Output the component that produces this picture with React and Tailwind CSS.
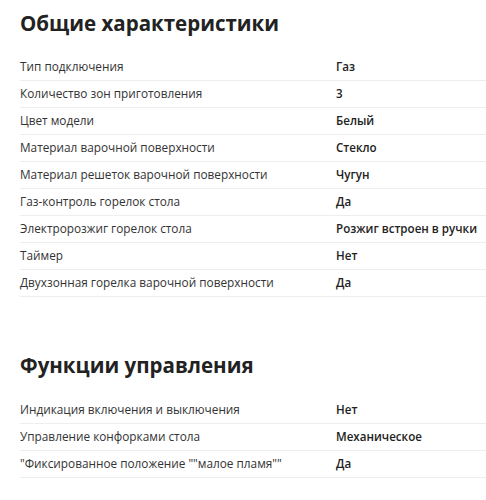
const sections = [
  {
    title: "Общие характеристики",
    rows: [
      ["Тип подключения", "Газ"],
      ["Количество зон приготовления", "3"],
      ["Цвет модели", "Белый"],
      ["Материал варочной поверхности", "Стекло"],
      ["Материал решеток варочной поверхности", "Чугун"],
      ["Газ-контроль горелок стола", "Да"],
      ["Электророзжиг горелок стола", "Розжиг встроен в ручки"],
      ["Таймер", "Нет"],
      ["Двухзонная горелка варочной поверхности", "Да"],
    ],
  },
  {
    title: "Функции управления",
    rows: [
      ["Индикация включения и выключения", "Нет"],
      ["Управление конфорками стола", "Механическое"],
      ['"Фиксированное положение ""малое пламя""', "Да"],
    ],
  },
];

export default function App() {
  return (
    <div
      className="w-[486px] h-[500px] overflow-hidden bg-white pl-5 pt-[9px]"
      style={{ fontFamily: '"Open Sans", "Liberation Sans", sans-serif' }}
    >
      {sections.map((s, i) => (
        <section key={s.title} className={i > 0 ? "mt-[54px]" : ""}>
          <h2 className="text-[20.5px] leading-[28px] font-bold text-[#222]">{s.title}</h2>
          <div className={i > 0 ? "mt-[18px]" : "mt-[17px]"}>
            {s.rows.map(([label, value]) => (
              <div key={label} className="flex h-[27px] items-center whitespace-nowrap border-b border-[#eeeeee] text-[12px]">
                <span className="w-[316px] shrink-0 text-[11.8px] text-[#333]">{label}</span>
                <span className="text-[11.6px] font-semibold text-[#222]">{value}</span>
              </div>
            ))}
          </div>
        </section>
      ))}
    </div>
  );
}
